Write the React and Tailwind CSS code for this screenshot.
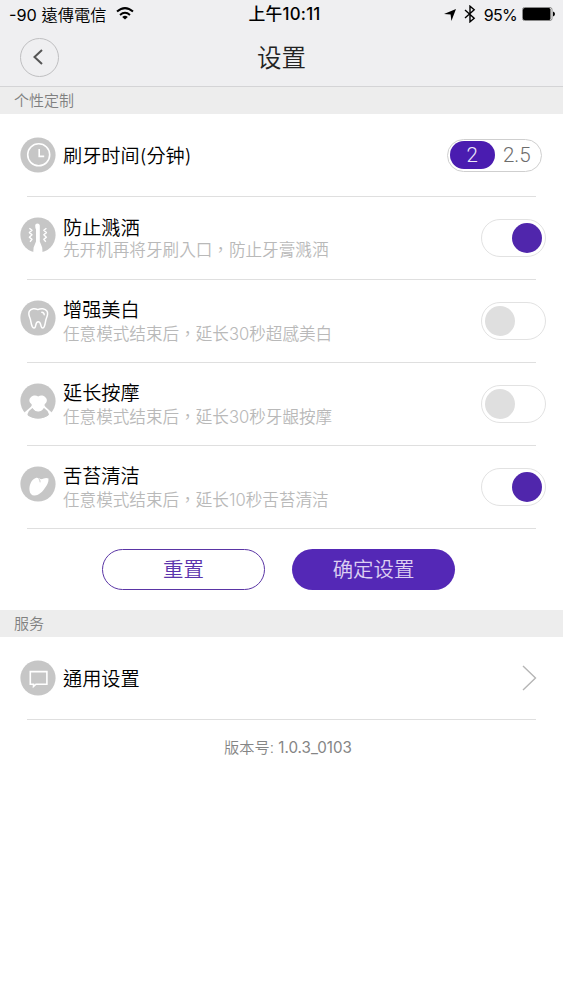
import { useState } from 'react';
import clsx from 'clsx';

const OPTIONS = [
  {
    id: 'splash',
    title: '防止溅洒',
    hint: '先开机再将牙刷入口，防止牙膏溅洒',
    icon: BrushIcon,
    tight: true,
  },
  {
    id: 'whiten',
    title: '增强美白',
    hint: '任意模式结束后，延长30秒超感美白',
    icon: ToothIcon,
  },
  {
    id: 'massage',
    title: '延长按摩',
    hint: '任意模式结束后，延长30秒牙龈按摩',
    icon: GumIcon,
  },
  {
    id: 'tongue',
    title: '舌苔清洁',
    hint: '任意模式结束后，延长10秒舌苔清洁',
    icon: TongueIcon,
  },
];

const DEFAULTS = { splash: true, whiten: false, massage: false, tongue: true };

function Disc({ children }) {
  return (
    <svg viewBox="0 0 36 36" className="w-9 h-9 shrink-0" fill="none">
      <circle cx="18" cy="18" r="17.6" fill="#c6c6c6" />
      {children}
    </svg>
  );
}

function ClockIcon() {
  return (
    <Disc>
      <circle cx="18.7" cy="17.8" r="11" stroke="#fff" strokeWidth="1.6" />
      <path d="M19.2 12v7.4h5" stroke="#fff" strokeWidth="1.6" />
    </Disc>
  );
}

function BrushIcon() {
  return (
    <Disc>
      <path
        d="M15.2 8.4q0-2 2.2-2t2.4 2v16.2l2.4 6 .4 5.4h-9.4l.4-5.4 2.4-6V12.4q-.8-1.6-.8-4z"
        fill="#fff"
      />
      <path
        d="M9.4 11.2l2.6 2-2.6 2.4 2.6 2.2-2.6 2.4 2.6 2.2-2 2.4M26.4 11.2l-2.6 2 2.6 2.4-2.6 2.2 2.6 2.4-2.6 2.2 2 2.4"
        stroke="#fff"
        strokeWidth="1.4"
        strokeLinejoin="round"
      />
    </Disc>
  );
}

function ToothIcon() {
  return (
    <Disc>
      <path
        d="M17.8 9.6c-2.8-1.4-6.7-1.3-8.4 1.6-1.3 2.4-.3 5.1.7 7.3 1 2.4.7 5.2 2.2 8.2 1 1.8 2.7 1.6 3.1-.1.6-2.4.6-4.8 2.8-4.8s2.4 2.4 3 4.8c.5 1.7 2.3 1.9 3.1-.1 1.2-2.8 1-5.6 2-8 1-2.2 2.1-4.9.7-7.3-1.8-2.9-6.1-3-9.2-1.6z"
        stroke="#fff"
        strokeWidth="1.5"
        strokeLinejoin="round"
      />
      <path d="M21.8 12.3q2.3.3 2.4 2.4" stroke="#fff" strokeWidth="1.4" strokeLinecap="round" />
    </Disc>
  );
}

function GumIcon() {
  return (
    <Disc>
      <path
        d="M18.2 13.4c-1.9-1.2-5-1.2-6.9.4-2.7 2.3-2.5 5.4.3 7.4.4 1 0 1.9-.9 2.7L4.4 29.6 7 33.2l5.6-8q2.4 3.6 5.6 3.6t5.6-3.6l5.6 8 2.4-3.6-6.2-5.7c-.9-.8-1.3-1.7-.9-2.7 2.8-2 2.9-5.1.2-7.4-1.9-1.6-4.8-1.6-6.7-.4z"
        fill="#fff"
      />
      <path
        d="M12.4 25q-3.6 2-5.1 6.6A17.6 17.6 0 0 0 18 35.6 17.6 17.6 0 0 0 29.1 31.5q-1.5-4.5-5.1-6.5-2 3.8-5.8 3.8T12.4 25z"
        fill="#c6c6c6"
      />
    </Disc>
  );
}

function TongueIcon() {
  return (
    <Disc>
      <path
        d="M9.5 24.2c-.5-5 2-11 6.3-12.2 1.9-.5 3.4.6 5.2 1.2 2.6-.2 4.8-2.2 7.5-.6.3 4-1.6 6.8-3.6 9.5-2 3.2-5.4 7.3-10.4 7.4-2.9.1-4.7-2.1-5-5.3z"
        fill="#fff"
      />
      <path d="M18.4 12.7q2 .6 1.7 3.6" stroke="#c6c6c6" strokeWidth=".9" />
    </Disc>
  );
}

function MessageIcon() {
  return (
    <Disc>
      <path
        d="M10.3 11.6h16.6v12.6H16l-2.5 2.2v-2.2h-3.2z"
        stroke="#fff"
        strokeWidth="1.6"
      />
    </Disc>
  );
}

function StatusBar() {
  return (
    <div className="flex h-[29px] items-center justify-between pl-[9px] pr-[8px] text-[16.3px] text-black">
      <div className="flex flex-1 items-center gap-[9px]">
        <span className="whitespace-nowrap pt-px">
          -90 <span className="font-[350]">遠傳電信</span>
        </span>
        <svg viewBox="0 0 18 13" className="mb-[2px] h-[13px] w-[18px]" fill="none" stroke="#000" strokeWidth="2">
          <path d="M1 4.6q8-7 16 0M4 7.9q5-4.2 10 0" />
          <path d="M9 12.6L6.2 9.9q2.8-2.1 5.6 0z" fill="#000" stroke="none" />
        </svg>
      </div>
      <span className="pt-px pl-[5px] text-[16.8px] font-medium tracking-[0.25px]">上午10:11</span>
      <div className="flex flex-1 items-center justify-end">
        <svg viewBox="0 0 12 12" className="mr-[8px] h-[12px] w-[12px]">
          <path d="M12 0L7.4 12 6.6 5.6 0 5z" />
        </svg>
        <svg viewBox="0 0 12 18" className="mr-[8px] mb-px h-[18px] w-[12px]" fill="none" stroke="#000" strokeWidth="1.4">
          <path d="M1 5l9.2 8.2L6 16.8V1.2l4.2 3.6L1 13" />
        </svg>
        <span className="text-[16px] tracking-[-0.7px]">95%</span>
        <svg viewBox="0 0 33 14" className="ml-[5px] mb-px h-[14px] w-[33px]">
          <rect x=".5" y=".5" width="29.5" height="13" rx="2" fill="#fff" stroke="#888" />
          <rect x="1" y="1" width="27.5" height="12" rx="1.5" />
          <path d="M31 4.5q2 .6 2 2.5t-2 2.5z" />
        </svg>
      </div>
    </div>
  );
}

function SectionTitle({ children }) {
  return (
    <h2 className="flex h-[27px] items-center bg-[#ededed] pt-[2px] pl-[14px] text-[15px] font-[350] text-[#808080]">
      {children}
    </h2>
  );
}

function Toggle({ on, onClick }) {
  return (
    <button
      role="switch"
      aria-checked={on}
      onClick={onClick}
      className={clsx(
        'flex h-[38px] w-[65px] shrink-0 items-center rounded-full border border-[#e2e2e2] bg-white px-[3px]',
        on ? 'justify-end' : 'justify-start'
      )}
    >
      <span className={clsx('h-[30px] w-[30px] rounded-full', on ? 'bg-[#5026ac]' : 'bg-[#dfdfdf]')} />
    </button>
  );
}

function Divider() {
  return <div className="mx-[27px] h-px bg-[#dfdfdf]" />;
}

export default function App() {
  const [minutes, setMinutes] = useState('2');
  const [enabled, setEnabled] = useState(DEFAULTS);

  const toggle = (id) => {
    setEnabled({ ...enabled, [id]: !enabled[id] });
  };

  const reset = () => {
    setMinutes('2');
    setEnabled(DEFAULTS);
  };

  return (
    <div className="min-h-screen bg-white font-['Inter','Noto_Sans_CJK_TC',sans-serif] text-black">
      <header className="h-[87px] border-b border-[#d4d4d6] bg-[#efeff1]">
        <StatusBar />
        <div className="flex h-[56px] items-center px-[20px]">
          <button className="flex h-[39px] w-[39px] items-center justify-center rounded-full border border-[#bfbfc1]">
            <svg viewBox="0 0 10 16" className="mr-[3px] h-[16px] w-[10px]" fill="none" stroke="#555" strokeWidth="2">
              <path d="M9 1L1.5 8 9 15" />
            </svg>
          </button>
          <h1 className="flex-1 pt-[2px] pr-[39px] text-center text-[24.5px] font-[350] text-[#222]">设置</h1>
        </div>
      </header>

      <SectionTitle>个性定制</SectionTitle>
      <div className="flex h-[82px] items-center pl-[20px] pr-[21px]">
        <ClockIcon />
        <span className="ml-[7px] flex-1 pt-[2px] text-[19.2px] font-[350]">刷牙时间(分钟)</span>
        <div className="flex h-[33px] w-[95px] items-center rounded-full border-[1.5px] border-[#cfcfcf] p-[2px] font-['Roboto'] text-[20.5px] font-[350]">
          {['2', '2.5'].map((value) => (
            <button
              key={value}
              onClick={() => setMinutes(value)}
              className={clsx(
                'flex h-[28px] flex-1 items-center justify-center rounded-full pt-px',
                minutes === value ? 'bg-[#4a1cb0] text-[#eee8fa]' : 'text-[#6c6c6c]'
              )}
            >
              {value}
            </button>
          ))}
        </div>
      </div>
      <Divider />

      {OPTIONS.map(({ id, title, hint, icon: Icon, tight }) => (
        <div key={id}>
          <div className="flex h-[82px] items-center pl-[20px] pr-[17px]">
            <div className="pb-[7px]">
              <Icon />
            </div>
            <div className={clsx('ml-[7px] flex flex-1 flex-col pt-[2px]', tight ? 'gap-0' : 'gap-[2px]')}>
              <span className="text-[19.2px] leading-[22px] font-[350]">{title}</span>
              <span className="text-[16.6px] leading-[22px] font-[350] text-[#b9b9b9]">{hint}</span>
            </div>
            <Toggle on={enabled[id]} onClick={() => toggle(id)} />
          </div>
          <Divider />
        </div>
      ))}

      <div className="flex h-[81px] items-center justify-center gap-[27px] pr-[6px] text-[20.4px] font-[350]">
        <button
          onClick={reset}
          className="h-[41px] w-[163px] rounded-full border-[1.5px] border-[#5a35a5] pt-px text-[#5b34ad]"
        >
          重置
        </button>
        <button className="h-[41px] w-[163px] rounded-full bg-[#5428b6] pt-px text-[#dccff2]">确定设置</button>
      </div>

      <SectionTitle>服务</SectionTitle>
      <div className="flex h-[82px] items-center pl-[20px] pr-[26px]">
        <MessageIcon />
        <span className="ml-[7px] flex-1 pt-[2px] text-[19.2px] font-[350]">通用设置</span>
        <svg viewBox="0 0 15 26" className="h-[26px] w-[15px]" fill="none" stroke="#b5b5b5" strokeWidth="1.4">
          <path d="M1 1l12.5 12L1 25" />
        </svg>
      </div>
      <Divider />

      <p className="mt-[17px] pl-[13px] text-center text-[15.2px] text-[#858585]">
        <span className="font-[350]">版本号:</span> 1.0.3_0103
      </p>
    </div>
  );
}
